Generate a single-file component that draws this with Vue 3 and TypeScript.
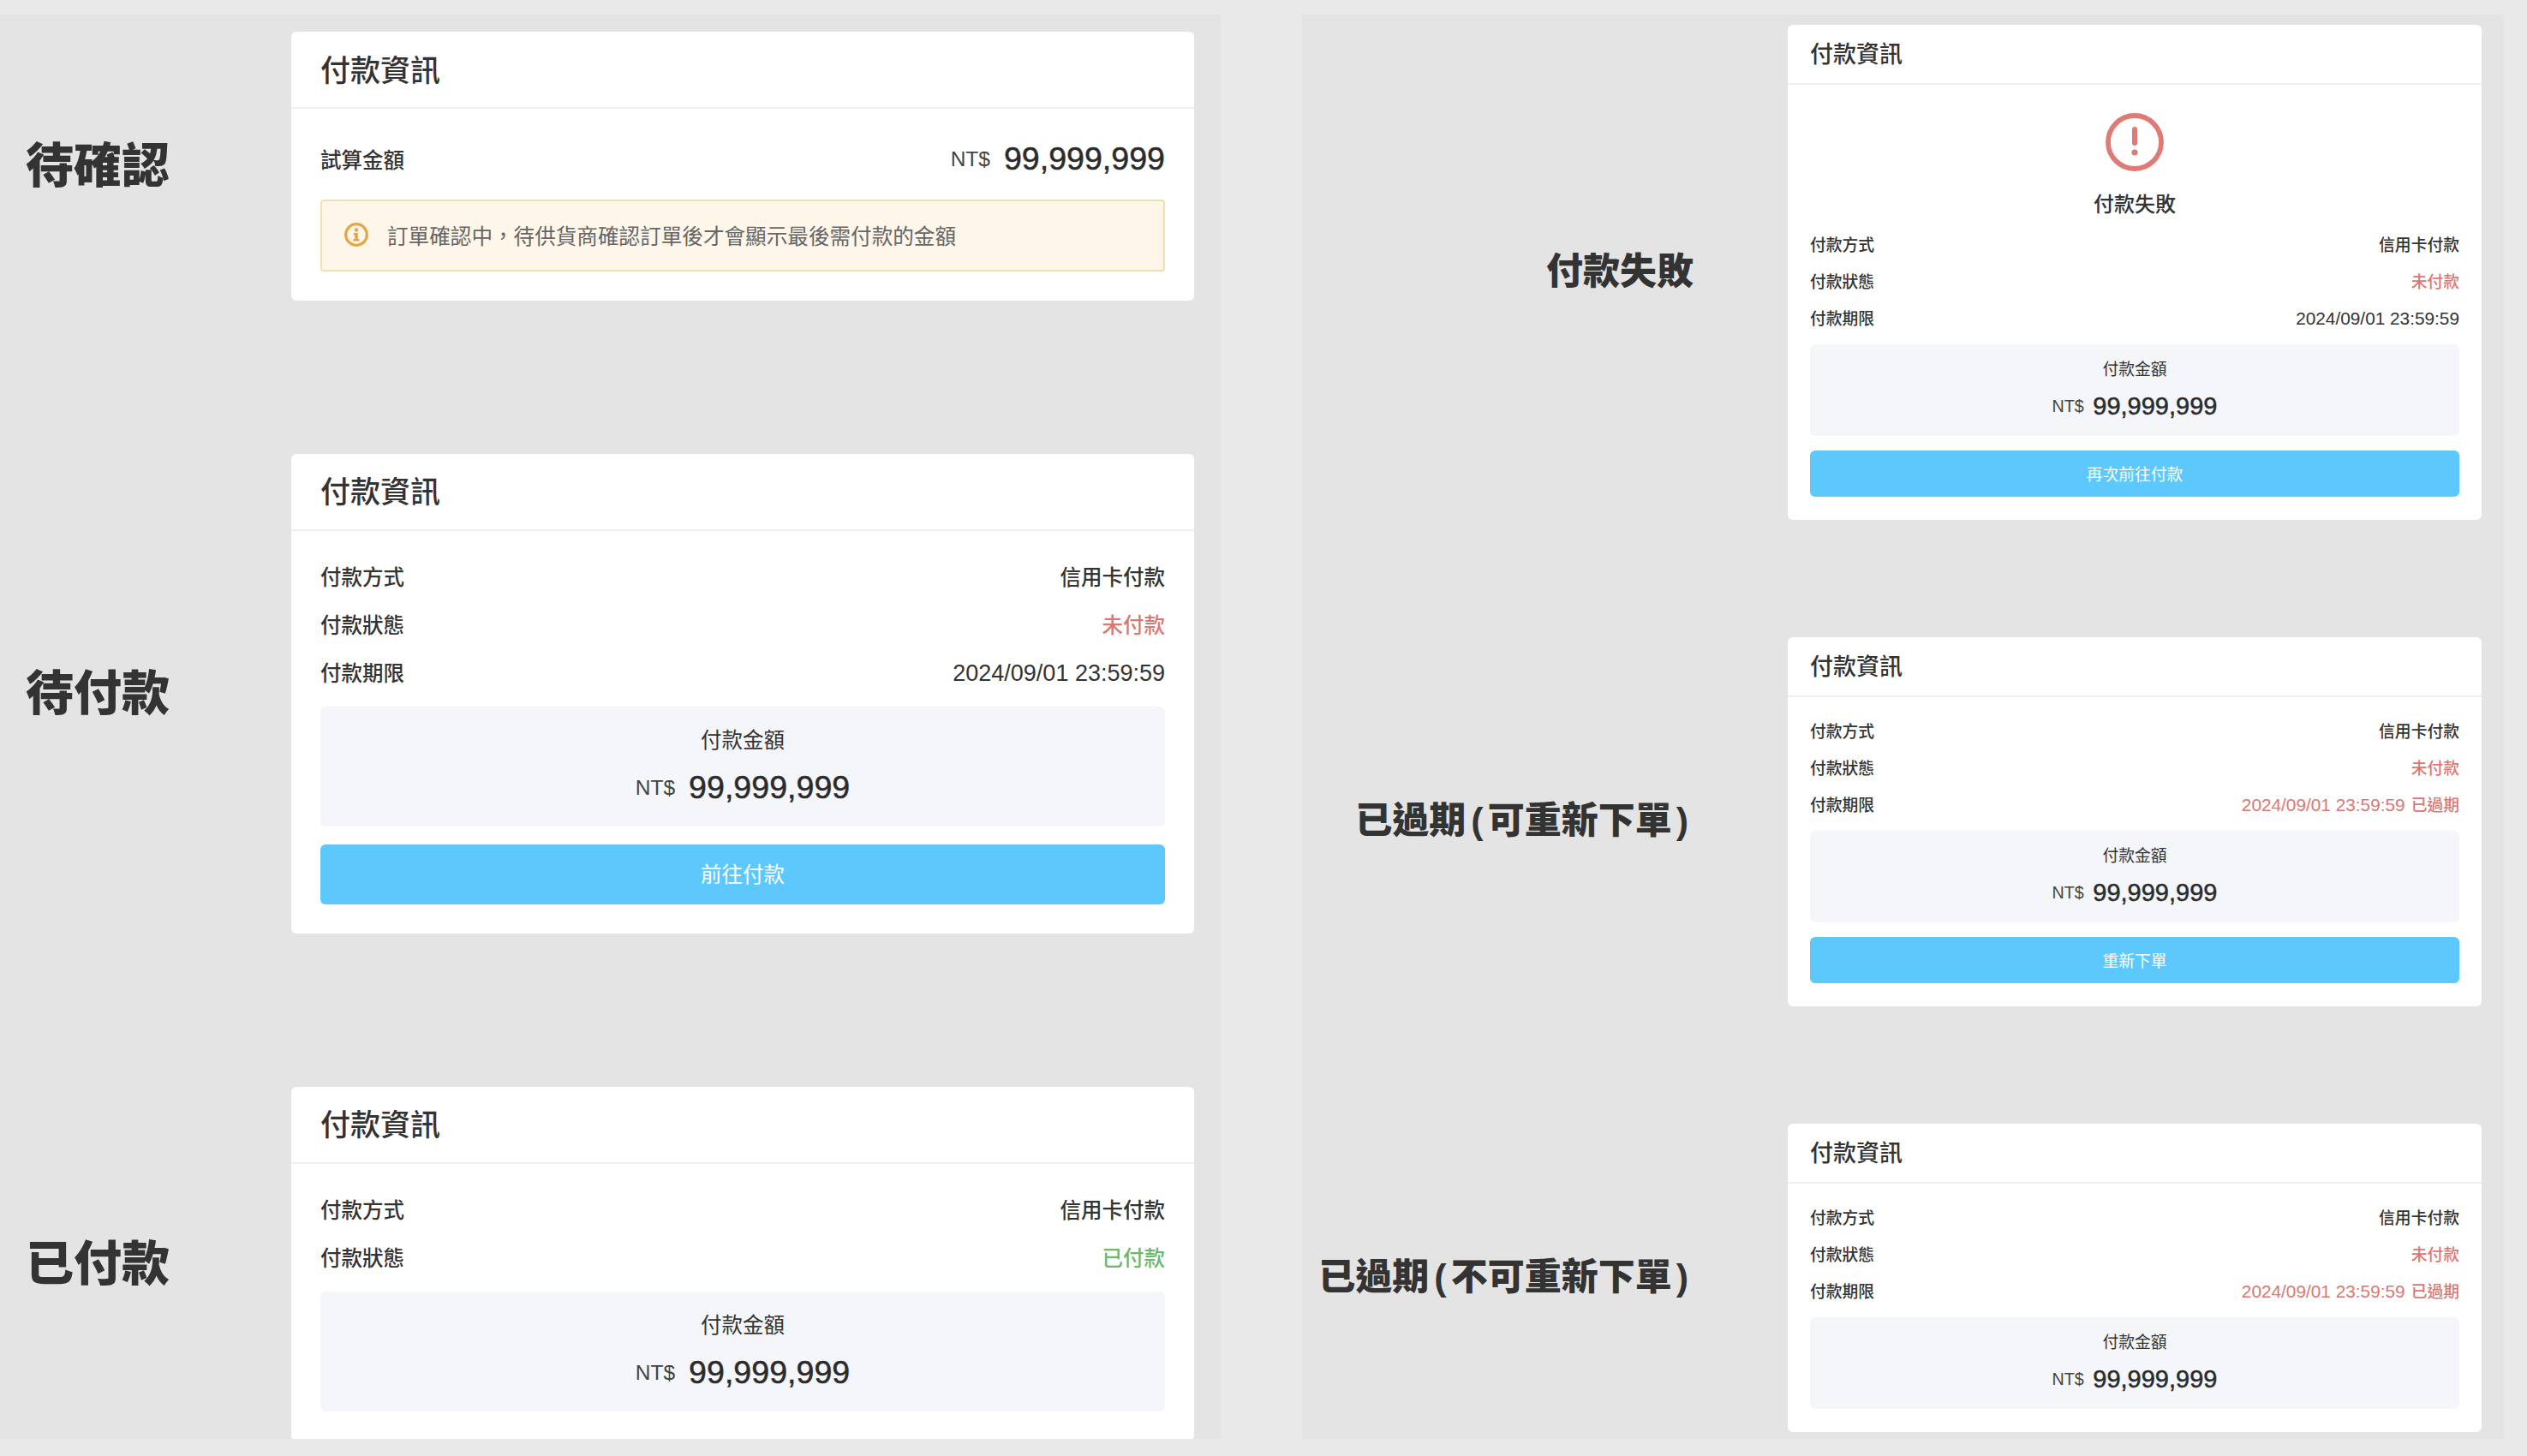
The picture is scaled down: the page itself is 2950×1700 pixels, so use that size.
<script setup lang="ts">
interface Row {
  name: string
  value: string
  tone?: 'red' | 'green'
  date?: boolean
  suffix?: string
}
interface Item {
  label: string
  note?: string
  rows: Row[]
  box?: boolean
  button?: string
  alert?: string
  estimate?: boolean
  failed?: boolean
}

const method: Row = { name: '付款方式', value: '信用卡付款' }
const unpaid: Row = { name: '付款狀態', value: '未付款', tone: 'red' }
const deadline: Row = { name: '付款期限', value: '2024/09/01 23:59:59', date: true }
const expired: Row = { name: '付款期限', value: '2024/09/01 23:59:59', date: true, tone: 'red', suffix: '已過期' }

const left: Item[] = [
  { label: '待確認', rows: [], estimate: true, alert: '訂單確認中，待供貨商確認訂單後才會顯示最後需付款的金額' },
  { label: '待付款', rows: [method, unpaid, deadline], box: true, button: '前往付款' },
  { label: '已付款', rows: [method, { name: '付款狀態', value: '已付款', tone: 'green' }], box: true },
]
const right: Item[] = [
  { label: '付款失敗', failed: true, rows: [method, unpaid, deadline], box: true, button: '再次前往付款' },
  { label: '已過期', note: '可重新下單', rows: [method, unpaid, expired], box: true, button: '重新下單' },
  { label: '已過期', note: '不可重新下單', rows: [method, unpaid, expired], box: true },
]
const panels = [
  { key: 'panel-left', items: left },
  { key: 'panel-right', items: right },
]
</script>

<template>
  <div class="page">
    <section v-for="panel in panels" :key="panel.key" class="panel" :class="panel.key">
      <div v-for="(item, i) in panel.items" :key="i" class="slot">
        <h2 class="state">
          {{ item.label }}<template v-if="item.note"><span class="paren-open">(</span>{{ item.note }}<span class="paren-close">)</span></template>
        </h2>
        <article class="card">
          <header class="card-head">付款資訊</header>
          <div class="card-body">
            <div v-if="item.failed" class="fail">
              <svg class="fail-icon" viewBox="0 0 68 68" aria-hidden="true">
                <circle cx="34" cy="34" r="31" fill="none" stroke="#e07a76" stroke-width="5.8" />
                <rect x="31" y="16" width="6" height="22" rx="3" fill="#e07a76" />
                <circle cx="34" cy="46" r="3.6" fill="#e07a76" />
              </svg>
              <div class="fail-text">付款失敗</div>
            </div>

            <div v-if="item.estimate" class="row row-estimate">
              <span>試算金額</span>
              <span class="money"><small>NT$</small><b>99,999,999</b></span>
            </div>
            <div v-if="item.alert" class="alert">
              <svg class="alert-icon" viewBox="0 0 28 28" aria-hidden="true">
                <circle cx="14" cy="14" r="12.3" fill="none" stroke="#e6a544" stroke-width="3.2" />
                <circle cx="14" cy="8.4" r="2.2" fill="#e6a544" />
                <path d="M10.8 12h5v7h1.6v2.4h-7v-2.4h1.8v-4.6h-1.4z" fill="#e6a544" />
              </svg>
              <span>{{ item.alert }}</span>
            </div>

            <div v-for="row in item.rows" :key="row.name" class="row">
              <span>{{ row.name }}</span>
              <span class="value" :class="row.tone">
                <span :class="{ date: row.date }">{{ row.value }}</span>
                <span v-if="row.suffix" class="suffix">{{ row.suffix }}</span>
              </span>
            </div>

            <div v-if="item.box" class="amount-box">
              <div class="amount-label">付款金額</div>
              <div class="money"><small>NT$</small><b>99,999,999</b></div>
            </div>
            <button v-if="item.button" class="pay" type="button">{{ item.button }}</button>
          </div>
        </article>
      </div>
    </section>
  </div>
</template>

<style scoped>
.page {
  width: 2950px;
  height: 1700px;
  display: flex;
  gap: 95px;
  padding-top: 17px;
  box-sizing: border-box;
  overflow: hidden;
  background: #e9e9e9;
  color: #333;
  font-family: "Liberation Sans", "Noto Sans CJK TC", sans-serif;
}
.panel {
  height: 1663px;
  flex: none;
  display: flex;
  flex-direction: column;
  overflow: hidden;
  background: #e4e4e4;
  box-sizing: border-box;
}
.panel-left {
  width: 1425px;
  padding-top: 20px;
  gap: 179px;
  --card-w: 1054px;
  --pad: 34px;
  --head-h: 88px;
  --title: 35px;
  --text: 24.5px;
  --date: 27px;
  --row-h: 56px;
  --body-top: 26px;
  --body-bottom: 34px;
  --box-h: 140px;
  --box-gap: 11px;
  --box-top: 20px;
  --label-h: 40px;
  --amount-gap: 10px;
  --amount-h: 50px;
  --small: 24.5px;
  --big: 37.6px;
  --money-gap: 16px;
  --btn-gap: 21px;
  --btn-h: 70px;
  --suffix-gap: 7px;
  --date-nudge: 4px;
}
.panel-right {
  width: 1403px;
  padding-top: 12px;
  gap: 137.5px;
  --card-w: 810px;
  --pad: 26px;
  --head-h: 68px;
  --title: 27px;
  --text: 18.8px;
  --date: 20.8px;
  --row-h: 43px;
  --body-top: 18px;
  --body-bottom: 26.5px;
  --box-h: 107px;
  --box-gap: 9px;
  --box-top: 14px;
  --label-h: 32px;
  --amount-gap: 6px;
  --amount-h: 40px;
  --small: 19.7px;
  --big: 29px;
  --money-gap: 10.5px;
  --btn-gap: 17px;
  --btn-h: 54px;
  --suffix-gap: 7px;
  --date-nudge: 3px;
}
.slot {
  flex: none;
  display: flex;
  align-items: center;
}
.state {
  flex: none;
  margin: 0 0 10px;
  font-weight: 900;
  white-space: nowrap;
  color: #333;
}
.panel-left .state {
  width: 340px;
  padding-left: 30px;
  box-sizing: border-box;
  font-size: 56px;
}
.panel-right .state {
  width: 457px;
  margin-right: 110px;
  text-align: right;
  font-size: 43px;
}
.paren-open {
  margin: 0 5px 0 6px;
}
.paren-close {
  margin: 0 6px 0 5px;
}
.card {
  flex: none;
  width: var(--card-w);
  background: #fff;
  border-radius: 6px;
}
.card-head {
  padding: 0 var(--pad) 4px;
  box-sizing: border-box;
  display: flex;
  align-items: center;
  border-bottom: 2px solid #eeeff2;
  font-size: var(--title);
  font-weight: 500;
  height: calc(var(--head-h) + 2px);
}
.card-body {
  padding: var(--body-top) var(--pad) var(--body-bottom);
}
.row {
  height: var(--row-h);
  padding-bottom: 3px;
  box-sizing: border-box;
  display: flex;
  justify-content: space-between;
  align-items: center;
  font-size: var(--text);
  font-weight: 500;
}
.row-estimate {
  height: 68px;
}
.value {
  display: flex;
  align-items: center;
  gap: var(--suffix-gap);
}
.date {
  margin-top: var(--date-nudge);
  font-size: var(--date);
  font-weight: 400;
}
.red {
  color: #dd7773;
}
.green {
  color: #6cb96c;
}
.money {
  display: flex;
  align-items: center;
  gap: var(--money-gap);
  font-weight: 400;
}
.money small {
  font-size: var(--small);
  color: #444;
}
.money b {
  font-size: var(--big);
  font-weight: 400;
  color: #2b2b2b;
  -webkit-text-stroke: 0.5px #2b2b2b;
}
.amount-box {
  height: var(--box-h);
  margin-top: var(--box-gap);
  padding-top: var(--box-top);
  box-sizing: border-box;
  background: #f5f6fa;
  border-radius: 6px;
  text-align: center;
}
.amount-label {
  height: var(--label-h);
  line-height: var(--label-h);
  font-size: var(--text);
}
.amount-box .money {
  height: var(--amount-h);
  margin-top: var(--amount-gap);
  justify-content: center;
}
.pay {
  display: block;
  width: 100%;
  height: var(--btn-h);
  margin-top: var(--btn-gap);
  padding: 0 0 2px;
  border: 0;
  border-radius: 6px;
  background: #5dc8fb;
  color: #fff;
  font: inherit;
  font-size: var(--text);
}
.fail {
  padding-top: 15px;
  margin-bottom: 8px;
  display: flex;
  flex-direction: column;
  align-items: center;
}
.fail-icon {
  width: 68px;
  height: 68px;
}
.fail-text {
  margin-top: 22px;
  height: 34px;
  line-height: 34px;
  font-size: 24px;
  font-weight: 500;
}
.alert {
  height: 84px;
  margin-top: 11.5px;
  padding: 0 0 2px 26px;
  box-sizing: border-box;
  display: flex;
  align-items: center;
  gap: 22px;
  background: #fef6e9;
  border: 2px solid #f1dfb4;
  border-radius: 4px;
  font-size: 24.6px;
  color: #666;
}
.alert-icon {
  width: 28px;
  height: 28px;
  flex: none;
}
</style>

<style>
html,
body {
  margin: 0;
  background: #e9e9e9;
}
</style>
